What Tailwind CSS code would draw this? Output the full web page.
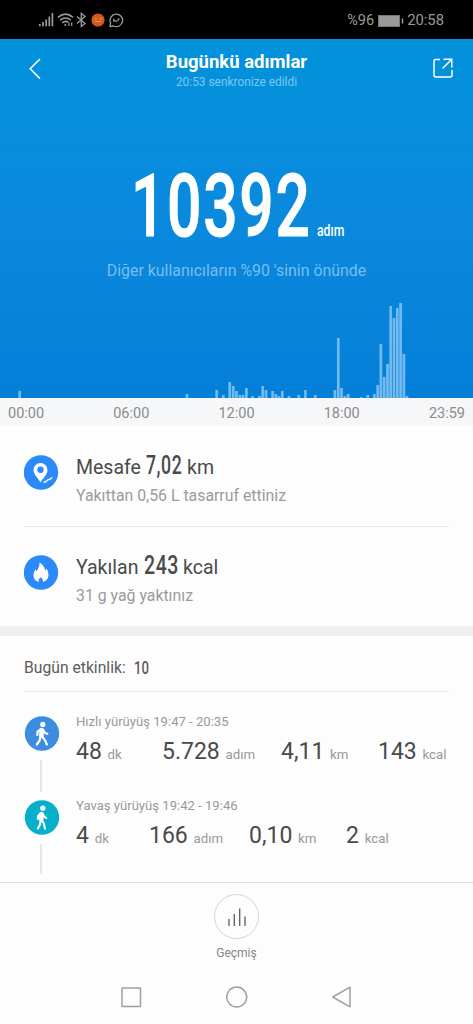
<!DOCTYPE html>
<html lang="tr">
<head>
  <meta charset="UTF-8">
  <title>Bugünkü adımlar</title>
  <script src="https://cdn.jsdelivr.net/npm/@tailwindcss/browser@4"></script>
</head>
<body class="bg-[#fdfdfd] w-[473px] h-[1024px] overflow-hidden flex flex-col font-['Roboto',sans-serif] text-[#4a4a4a]">

  <!-- Status bar -->
  <div class="bg-black h-[39px] shrink-0 flex items-center justify-between pl-[38px] pr-[29px] text-[#9a9a9a]">
    <div class="flex items-center gap-[3px] pt-px">
      <svg class="w-4 h-4" viewBox="0 0 16 16" fill="none" stroke="currentColor" stroke-width="1.7">
        <path d="M1.8 12v2.2M5 10v4.2M8.2 7.4v6.8M11.3 4.4v9.8M14.4 1v13.2"/>
      </svg>
      <svg class="w-[17px] h-4" viewBox="0 0 17 16" fill="none" stroke="currentColor" stroke-width="1.6">
        <path d="M1 5.3Q8.5-1 16 5.3M3.2 8.2Q8.5 3.8 13.8 8.2M5.4 10.8Q8.5 8.2 11.3 10.5"/>
        <circle cx="8.3" cy="13" r="1" fill="currentColor" stroke="none"/>
        <path d="M12 10.5v3.5M14.7 10.5v3.5" stroke-width="1.2"/>
      </svg>
      <svg class="w-[11px] h-4 -ml-px" viewBox="0 0 11 16" fill="none" stroke="currentColor" stroke-width="1.3">
        <path d="M1 4.5L9 11.5L5.3 14.5V1.3L9 4.5L1 11.5"/>
      </svg>
      <svg class="w-[14px] h-[14px] ml-px" viewBox="0 0 14 14">
        <circle cx="7" cy="7" r="6.6" fill="#cf5a1c"/>
        <path d="M3.5 6h2.5M8 6h2.5M4 8.5h6" stroke="#e9935d" stroke-width="1"/>
      </svg>
      <svg class="w-[15px] h-[15px] ml-px" viewBox="0 0 15 15" fill="none" stroke="currentColor" stroke-width="1.3">
        <path d="M1 13.5L1.6 10A6.3 6.3 0 1 1 4.5 13Z"/>
        <path d="M4.8 9V6.5L7.3 8.6L10.2 6.2M8.6 6h2" stroke-width="1.1"/>
      </svg>
    </div>
    <div class="flex items-center text-[14.5px] pt-[2px]">
      <span class="w-[28px]">%96</span>
      <svg class="w-[26px] h-3 ml-[3px] mr-[3px]" viewBox="0 0 26 12">
        <rect x=".5" y=".5" width="21" height="11" fill="#999" stroke="#777"/>
        <path d="M24.5 3.5v5" stroke="#999" stroke-width="1.5"/>
      </svg>
      <span class="text-[14.8px]">20:58</span>
    </div>
  </div>

  <!-- Header with step count and chart -->
  <section class="h-[359px] shrink-0 bg-linear-to-b from-[#0292db] via-[#0b89dd] via-50% to-[#047fd8] flex flex-col">
    <header class="flex pl-[29px] pr-[20px] pt-[12px]">
      <svg class="w-[24px] h-[22px] mt-[7px]" viewBox="0 0 24 22" fill="none" stroke="#fff" stroke-width="1.5">
        <path d="M11 1L1.2 10.8L11 20.6"/>
      </svg>
      <div class="flex-1 text-center text-white pr-[13px]">
        <h1 class="text-[18.5px] leading-[22px] font-bold">Bugünkü adımlar</h1>
        <p class="text-[11.9px] leading-[17px] pt-px text-[#7cc8f1]">20:53 senkronize edildi</p>
      </div>
      <svg class="w-5 h-5 mt-[7px]" viewBox="0 0 20 20" fill="none" stroke="#fff" stroke-width="1.5">
        <path d="M7 1.5H2.5Q1 1.5 1 3V17Q1 19 3 19H17Q19 19 19 17V12M10.5 1.2H18.8V9.5M18.5 1.5L9.5 10.5"/>
      </svg>
    </header>

    <div class="flex items-baseline pl-[131px] mt-[71px] h-[88px] text-white">
      <span class="block w-[186px] text-[87px] leading-[88px] font-medium [-webkit-text-stroke:1px_#fff] tracking-[2.5px] origin-left scale-x-[.695]">10392</span>
      <span class="block text-[17px] leading-5 font-medium origin-left scale-x-[.72]">adım</span>
    </div>
    <p class="text-center text-[15.9px] leading-5 text-[#75bff0] mt-[11px]">Diğer kullanıcıların %90 'sinin önünde</p>

    <svg class="w-[473px] h-[100px] mt-auto" viewBox="0 0 473 100" fill="none" stroke="#72baf0" stroke-width="2.7">
      <path d="M19.7 100v-7M187 100v-4M216.7 100v-8M223.3 100v-3M229.7 100v-16M233.2 100v-12M236.5 100v-7M239.9 100v-3M243.1 100v-3M246.4 100v-10M252.5 100v-2M259.5 100v-2M262.7 100v-12M266 100v-8M272.6 100v-7M275.8 100v-4M279 100v-2M282.3 100v-7M289 100v-2M298.7 100v-3M305.4 100v-8M315.3 100v-3M334.9 100v-8M338.3 100v-60M341.5 100v-10M344.8 100v-2M348.1 100v-4M361.2 100v-1M367.8 100v-3M374.4 100v-4M377.7 100v-13M380.9 100v-54M384.2 100v-21M387.5 100v-34M390.7 100v-92M394 100v-80M397.3 100v-90M400.6 100v-95M403.9 100v-44M407 100v-2"/>
    </svg>
  </section>

  <!-- Time axis -->
  <div class="h-[28px] shrink-0 bg-[#f6f7f9] flex justify-between items-center px-[8px] pt-[3px] text-[14.5px] text-[#8c8c8c]">
    <span>00:00</span><span>06:00</span><span>12:00</span><span>18:00</span><span>23:59</span>
  </div>

  <!-- Distance and calories -->
  <section class="h-[200px] shrink-0 px-6">
    <div class="flex h-[101px] border-b border-[#e7e7e7]">
      <svg class="w-[35px] h-[35px] mt-[29px] mr-[17px]" viewBox="0 0 35 35">
        <circle cx="17" cy="17.5" r="17.2" fill="#2c8af8"/>
        <path d="M16.5 8a7 7 0 0 1 7 7c0 4.5-5 8.5-7 12.5c-2-4-7-8-7-12.5a7 7 0 0 1 7-7Z" fill="#fff"/>
        <circle cx="16.5" cy="14.8" r="3.2" fill="#2c8af8"/>
        <path d="M19.5 27.2c2 .3 2.5-.4 3.6-1.8s2-.3 2.9-1.2 1.3-1.6 2.5-1.2" fill="none" stroke="#fff" stroke-width="1.3"/>
      </svg>
      <div class="pt-[26px]">
        <p class="flex items-baseline text-[19.5px] leading-[26px] h-[26px]">
          <span class="w-[70px]">Mesafe</span>
          <span class="w-[41px] text-[26px] font-medium tracking-[.8px] origin-left scale-x-[.68] whitespace-nowrap">7,02</span>
          <span>km</span>
        </p>
        <p class="text-[15.85px] leading-5 mt-[8px] text-[#9b9b9b]">Yakıttan 0,56 L tasarruf ettiniz</p>
      </div>
    </div>
    <div class="flex">
      <svg class="w-[35px] h-[35px] mt-[28px] mr-[17px]" viewBox="0 0 35 35">
        <circle cx="17" cy="17.5" r="17.2" fill="#2c8af8"/>
        <path d="M15.6 7.5c2.8 1.8 5.1 4.5 5.5 8c.7-.5 1.1-1.3 1.2-2.2c1.4 2.1 2.300 4.500 2.200 7c-.1 3.600-2.400 5.700-5.600 6.700c.4-2.200-.2-3.300-2.200-4.800c-1.900 1.500-2.500 2.600-2 4.800c-3.200-.9-5.200-3-5.200-6.400c0-2.500.9-4.300 2-6.300c.3.9.7 1.500 1.400 1.900c1.100-2.900 2.700-5.200 2.700-8.700Z" fill="#fff"/>
      </svg>
      <div class="pt-[25px]">
        <p class="flex items-baseline text-[19.5px] leading-[26px] h-[26px]">
          <span class="w-[68px]">Yakılan</span>
          <span class="w-[39px] text-[26px] font-medium tracking-[.8px] origin-left scale-x-[.75] whitespace-nowrap">243</span>
          <span>kcal</span>
        </p>
        <p class="text-[15.85px] leading-5 mt-[8px] text-[#9b9b9b]">31 g yağ yaktınız</p>
      </div>
    </div>
  </section>

  <div class="h-[10px] shrink-0 bg-[#edeff1]"></div>

  <!-- Activities -->
  <section class="h-[246px] shrink-0 px-6 overflow-hidden">
    <h2 class="flex items-center h-[56px] pt-[9px] border-b border-[#e7e7e7] text-[15.7px] text-[#5c5c5c]">
      <span class="w-[110px]">Bugün etkinlik:</span>
      <span class="text-[17.5px] font-medium origin-left scale-x-[.75]">10</span>
    </h2>

    <div class="flex h-[84px] mt-[20px]">
      <div class="w-[52px] flex flex-col items-start pt-[4px]">
        <svg class="w-[36px] h-[36px] shrink-0" viewBox="0 0 36 36">
          <circle cx="18" cy="17.5" r="17.2" fill="#3c8ce0"/>
          <g fill="none" stroke="#fff" stroke-linecap="round" stroke-linejoin="round">
            <circle cx="18.8" cy="8.4" r="2.6" fill="#fff" stroke="none"/>
            <path d="M17.8 14L17.3 19.5" stroke-width="4.6"/>
            <path d="M16.5 13.5l-2.9 2.2-.3 3.3M19.5 14.3l1.5 2.7 2.3.8M16.5 20.5l-.9 4-2.8 4M18.2 20.5l2.7 3.6 2 4.4" stroke-width="2.2"/>
          </g>
        </svg>
        <div class="w-[2px] h-[32px] bg-[#e6e6e6] ml-[16px] mt-[8px]"></div>
      </div>
      <div>
        <p class="text-[13.1px] leading-4 pt-[2px] text-[#999]">Hızlı yürüyüş 19:47 - 20:35</p>
        <div class="flex items-baseline mt-[6px] text-[23px] leading-8">
          <p class="w-[86px]">48 <small class="text-[13.3px] text-[#999]">dk</small></p>
          <p class="w-[119px]">5.728 <small class="text-[13.3px] text-[#999]">adım</small></p>
          <p class="w-[97px]">4,11 <small class="text-[13.3px] text-[#999]">km</small></p>
          <p class="whitespace-nowrap">143 <small class="text-[13.3px] text-[#999]">kcal</small></p>
        </div>
      </div>
    </div>

    <div class="flex h-[84px]">
      <div class="w-[52px] flex flex-col items-start pt-[4px]">
        <svg class="w-[36px] h-[36px] shrink-0" viewBox="0 0 36 36">
          <circle cx="18" cy="17.5" r="17.2" fill="#06b0ca"/>
          <g fill="none" stroke="#fff" stroke-linecap="round" stroke-linejoin="round">
            <circle cx="18.8" cy="8.2" r="2.6" fill="#fff" stroke="none"/>
            <path d="M17.6 14L17.2 19.5" stroke-width="4.4"/>
            <path d="M16.3 13.5l-2.2 2.5-.3 3M19.2 14.3l1.1 2.5 1.9 1.1M16.5 20.5l-.5 4-2.1 4M18 20.5l2 3.6 1 4.6" stroke-width="2"/>
          </g>
        </svg>
        <div class="w-[2px] h-[30px] bg-[#e6e6e6] ml-[16px] mt-[8px]"></div>
      </div>
      <div>
        <p class="text-[13.1px] leading-4 pt-[2px] text-[#999]">Yavaş yürüyüş 19:42 - 19:46</p>
        <div class="flex items-baseline mt-[6px] text-[23px] leading-8">
          <p class="w-[73px]">4 <small class="text-[13.3px] text-[#999]">dk</small></p>
          <p class="w-[100px]">166 <small class="text-[13.3px] text-[#999]">adım</small></p>
          <p class="w-[97px]">0,10 <small class="text-[13.3px] text-[#999]">km</small></p>
          <p class="whitespace-nowrap">2 <small class="text-[13.3px] text-[#999]">kcal</small></p>
        </div>
      </div>
    </div>
  </section>

  <!-- History button -->
  <div class="h-[88px] shrink-0 border-t border-[#e0e0e0] flex flex-col items-center pt-[11px]">
    <button class="w-[45px] h-[45px] rounded-full border border-[#d5d5d5] flex items-center justify-center">
      <svg class="w-5 h-5" viewBox="0 0 20 20" fill="none" stroke="#666" stroke-width="1.4">
        <path d="M2 12v7M7.3 7v12M12.7 1.5v17.5M18 9.5v9.5"/>
      </svg>
    </button>
    <span class="text-[12px] leading-4 mt-[6px] text-[#858585]">Geçmiş</span>
  </div>

  <!-- Navigation bar -->
  <nav class="flex-1 flex items-start justify-between px-[120px] pt-[16px]">
    <svg class="w-[22px] h-[22px]" viewBox="0 0 22 22" fill="none" stroke="#a0a0a0" stroke-width="1.5">
      <rect x="2" y="2" width="18.5" height="18.5" rx=".5"/>
    </svg>
    <svg class="w-[22px] h-[22px]" viewBox="0 0 22 22" fill="none" stroke="#a0a0a0" stroke-width="1.5">
      <circle cx="10.7" cy="11" r="10"/>
    </svg>
    <svg class="w-[22px] h-[22px]" viewBox="0 0 22 22" fill="none" stroke="#a0a0a0" stroke-width="1.5" stroke-linejoin="round">
      <path d="M19 1.2V20.8L1.7 11Z"/>
    </svg>
  </nav>

</body>
</html>
